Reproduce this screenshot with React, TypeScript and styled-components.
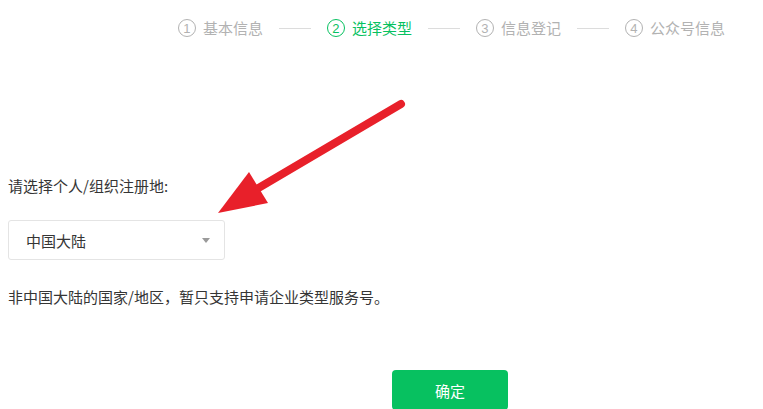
import React from 'react'
import styled, { createGlobalStyle } from 'styled-components'

const cjk = '"Noto Sans CJK SC", "Noto Sans", "Liberation Sans", sans-serif'
const green = '#07c160'
const grey = '#b2b2b2'

const Global = createGlobalStyle`
  html, body {
    margin: 0;
    padding: 0;
    background: #fff;
    overflow: hidden;
  }
  body {
    font-family: ${cjk};
    color: #353535;
  }
`

const Page = styled.div`
  position: relative;
  width: 763px;
  height: 409px;
  overflow: hidden;
  display: flex;
  flex-direction: column;
`

const Steps = styled.div`
  display: flex;
  align-items: center;
  justify-content: flex-end;
  padding: 18px 38px 0 0;
  height: 20px;
`

const Step = styled.div<{ $active?: boolean }>`
  display: flex;
  align-items: center;
  gap: 7px;
  font-size: 15px;
  line-height: 20px;
  color: ${p => (p.$active ? green : grey)};
`

const Num = styled.span`
  display: inline-flex;
  align-items: center;
  justify-content: center;
  width: 18px;
  height: 18px;
  border: 1.2px solid currentColor;
  border-radius: 50%;
  font-size: 13px;
  line-height: 1;
  font-family: "Liberation Sans", sans-serif;
  box-sizing: border-box;
`

const Dash = styled.span`
  width: 32px;
  height: 1px;
  background: #dcdcdc;
  margin: 0 16px;
`

const Body = styled.div`
  display: flex;
  flex-direction: column;
  align-items: flex-start;
  padding: 0 8px;
  margin-top: 138px;
`

const Label = styled.div`
  font-size: 15px;
  line-height: 20px;
`

const Select = styled.div`
  margin-top: 24px;
  width: 217px;
  height: 40px;
  box-sizing: border-box;
  border: 1px solid #e4e4e4;
  border-radius: 3px;
  display: flex;
  align-items: center;
  justify-content: space-between;
  padding: 0 14px 0 17px;
  font-size: 15px;
`

const Caret = styled.span`
  width: 0;
  height: 0;
  border-left: 4px solid transparent;
  border-right: 4px solid transparent;
  border-top: 5px solid #9a9a9a;
`

const Note = styled.div`
  margin-top: 27px;
  font-size: 15px;
  line-height: 20px;
`

const Confirm = styled.button`
  margin: 63px 0 0 384px;
  width: 116px;
  height: 40px;
  border: none;
  border-radius: 4px;
  background: ${green};
  color: #fff;
  font-family: ${cjk};
  font-size: 15px;
  padding: 0;
`

const Arrow = styled.svg`
  position: absolute;
  left: 0;
  top: 0;
  pointer-events: none;
`

const steps = ['基本信息', '选择类型', '信息登记', '公众号信息']

export default function App() {
  return (
    <Page>
      <Global />
      <Steps>
        {steps.map((s, i) => (
          <React.Fragment key={s}>
            {i > 0 && <Dash />}
            <Step $active={i === 1}>
              <Num>{i + 1}</Num>
              {s}
            </Step>
          </React.Fragment>
        ))}
      </Steps>
      <Body>
        <Label>请选择个人/组织注册地:</Label>
        <Select>
          中国大陆
          <Caret />
        </Select>
        <Note>非中国大陆的国家/地区，暂只支持申请企业类型服务号。</Note>
        <Confirm>确定</Confirm>
      </Body>
      <Arrow width="763" height="409" viewBox="0 0 763 409">
        <line x1="401" y1="104" x2="255" y2="190" stroke="#e8202a" strokeWidth="8" strokeLinecap="round" />
        <polygon points="218,213 249,172 268,203" fill="#e8202a" />
      </Arrow>
    </Page>
  )
}
